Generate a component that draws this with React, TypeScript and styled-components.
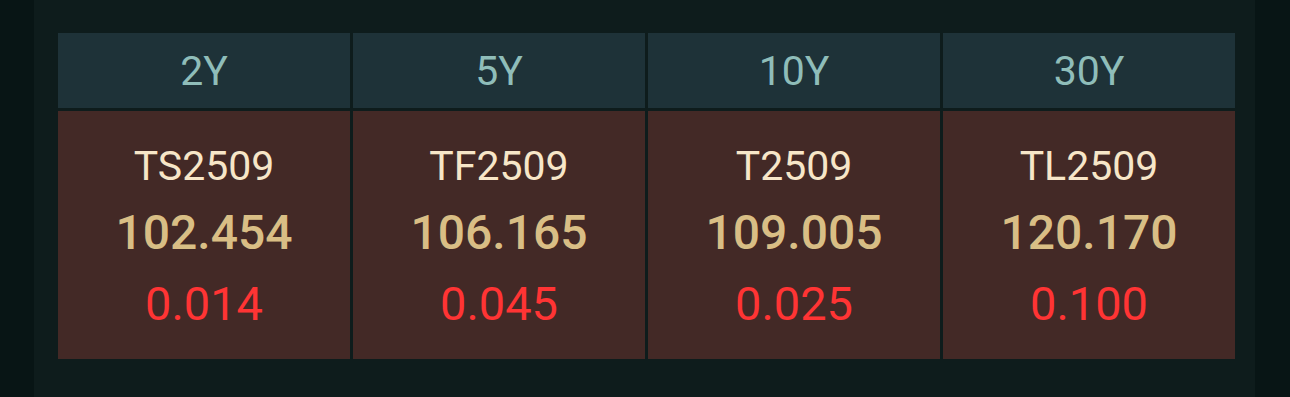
import React from "react";
import styled, { createGlobalStyle } from "styled-components";

const Global = createGlobalStyle`
  html, body { margin: 0; padding: 0; background: #081515; }
  body { font-family: Roboto, "Noto Sans", sans-serif; }
`;

const Page = styled.div`
  display: flex;
  height: 397px;
  background: #081515;
  padding-left: 34px;
  box-sizing: border-box;
`;

const Panel = styled.div`
  width: 1221px;
  height: 397px;
  background: #0e1c1c;
  padding: 33px 20px 0 24px;
  box-sizing: border-box;
`;

const Grid = styled.div`
  display: grid;
  grid-template-columns: repeat(4, 292px);
  grid-template-rows: 75px 248px;
  gap: 3px;
`;

const Header = styled.div`
  background: #1e3238;
  color: #8fbdb9;
  font-size: 41px;
  display: flex;
  align-items: center;
  justify-content: center;
`;

const Body = styled.div`
  background: #432926;
  display: flex;
  flex-direction: column;
  align-items: center;
  justify-content: flex-start;
  padding-top: 25px;
  box-sizing: border-box;
`;

const Code = styled.div`
  color: #f7e6c8;
  font-size: 41px;
  line-height: 61px;
`;

const Price = styled.div`
  color: #d9be85;
  font-size: 48px;
  font-weight: 500;
  line-height: 72px;
`;

const Change = styled.div<{ $up: boolean }>`
  color: ${(p) => (p.$up ? "#ff3434" : "#2fd07a")};
  font-size: 47px;
  line-height: 70px;
`;

const data = [
  { tenor: "2Y", code: "TS2509", price: "102.454", chg: "0.014" },
  { tenor: "5Y", code: "TF2509", price: "106.165", chg: "0.045" },
  { tenor: "10Y", code: "T2509", price: "109.005", chg: "0.025" },
  { tenor: "30Y", code: "TL2509", price: "120.170", chg: "0.100" },
];

export default function App() {
  return (
    <>
      <Global />
      <Page>
        <Panel>
          <Grid>
            {data.map((d) => (
              <Header key={d.tenor}>{d.tenor}</Header>
            ))}
            {data.map((d) => (
              <Body key={d.code}>
                <Code>{d.code}</Code>
                <Price>{d.price}</Price>
                <Change $up>{d.chg}</Change>
              </Body>
            ))}
          </Grid>
        </Panel>
      </Page>
    </>
  );
}
